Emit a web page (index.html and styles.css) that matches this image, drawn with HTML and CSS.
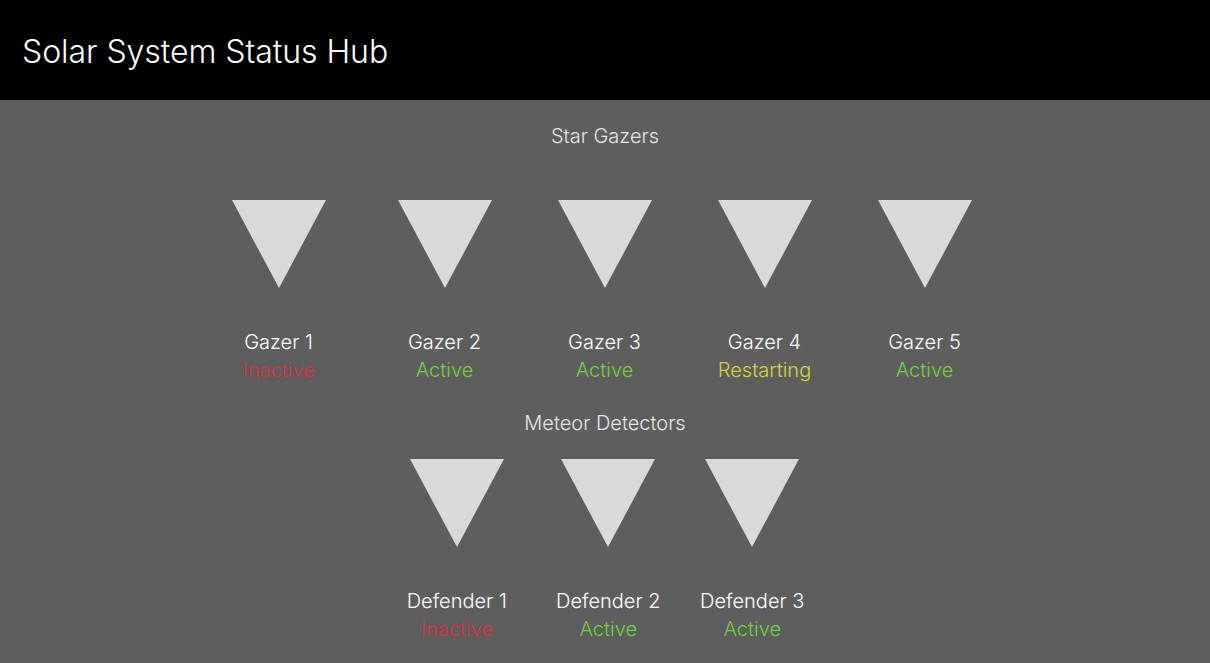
FILE: index.html
```html
<!DOCTYPE html>
<html>
<head>
<meta charset="utf-8">
<title>Solar System Status Hub</title>
<link rel="stylesheet" href="styles.css">
</head>
<body>
<header class="topbar">
  <h1 class="title">Solar System Status Hub</h1>
</header>
<main class="content">
  <section class="group group-gazers">
    <h2 class="group-title">Star Gazers</h2>
    <div class="units units-gazers">
      <div class="unit"><div class="tri"></div><div class="name">Gazer 1</div><div class="status inactive">Inactive</div></div>
      <div class="unit"><div class="tri"></div><div class="name">Gazer 2</div><div class="status active">Active</div></div>
      <div class="unit"><div class="tri"></div><div class="name">Gazer 3</div><div class="status active">Active</div></div>
      <div class="unit"><div class="tri"></div><div class="name">Gazer 4</div><div class="status restarting">Restarting</div></div>
      <div class="unit"><div class="tri"></div><div class="name">Gazer 5</div><div class="status active">Active</div></div>
    </div>
  </section>
  <section class="group group-meteor">
    <h2 class="group-title">Meteor Detectors</h2>
    <div class="units units-meteor">
      <div class="unit"><div class="tri"></div><div class="name">Defender 1</div><div class="status inactive">Inactive</div></div>
      <div class="unit"><div class="tri"></div><div class="name">Defender 2</div><div class="status active">Active</div></div>
      <div class="unit"><div class="tri"></div><div class="name">Defender 3</div><div class="status active">Active</div></div>
    </div>
  </section>
</main>
</body>
</html>
```
FILE: styles.css
```css
* { box-sizing: border-box; }
html, body {
  margin: 0;
  padding: 0;
  height: 100%;
}
body {
  background: #5e5e5e;
  font-family: Inter, "Noto Sans", sans-serif;
  color: #ffffff;
  overflow: hidden;
}
.topbar {
  height: 100px;
  background: #000000;
  display: flex;
  align-items: center;
  padding-left: 22px;
}
.title {
  margin: 0;
  font-size: 32px;
  font-weight: 300;
  color: #ffffff;
  letter-spacing: -0.05px;
  padding-top: 2px;
}
.content {
  display: flex;
  flex-direction: column;
  align-items: center;
}
.group {
  display: flex;
  flex-direction: column;
  align-items: center;
  width: 100%;
}
.group-title {
  margin: 0;
  font-size: 20px;
  font-weight: 300;
  color: #e6e6e6;
  line-height: 24px;
}
.group-gazers .group-title { margin-top: 24px; }
.group-meteor .group-title { margin-top: 27px; }
.units {
  display: flex;
  justify-content: center;
}
.units-gazers {
  gap: 65px;
  padding-right: 7px;
  margin-top: 52px;
}
.units-gazers .unit { width: 95px; }
.units-gazers .unit:first-child { margin-right: 6px; }
.units-meteor {
  gap: 40px;
  padding-right: 1px;
  margin-top: 24px;
}
.units-meteor .unit { width: 104px; }
.units-meteor .unit:first-child { margin-right: 7.5px; }
.unit {
  display: flex;
  flex-direction: column;
  align-items: center;
}
.tri {
  width: 0;
  height: 0;
  border-left: 47.5px solid transparent;
  border-right: 47.5px solid transparent;
  border-top: 88px solid #d9d9d9;
}
.name {
  margin-top: 40px;
  font-size: 20px;
  font-weight: 300;
  line-height: 28px;
  color: #ffffff;
  white-space: nowrap;
}
.status {
  font-size: 20px;
  font-weight: 300;
  line-height: 28px;
  white-space: nowrap;
}
.inactive { color: #d9363e; }
.active { color: #72d13c; }
.restarting { color: #d8d23a; }
```
